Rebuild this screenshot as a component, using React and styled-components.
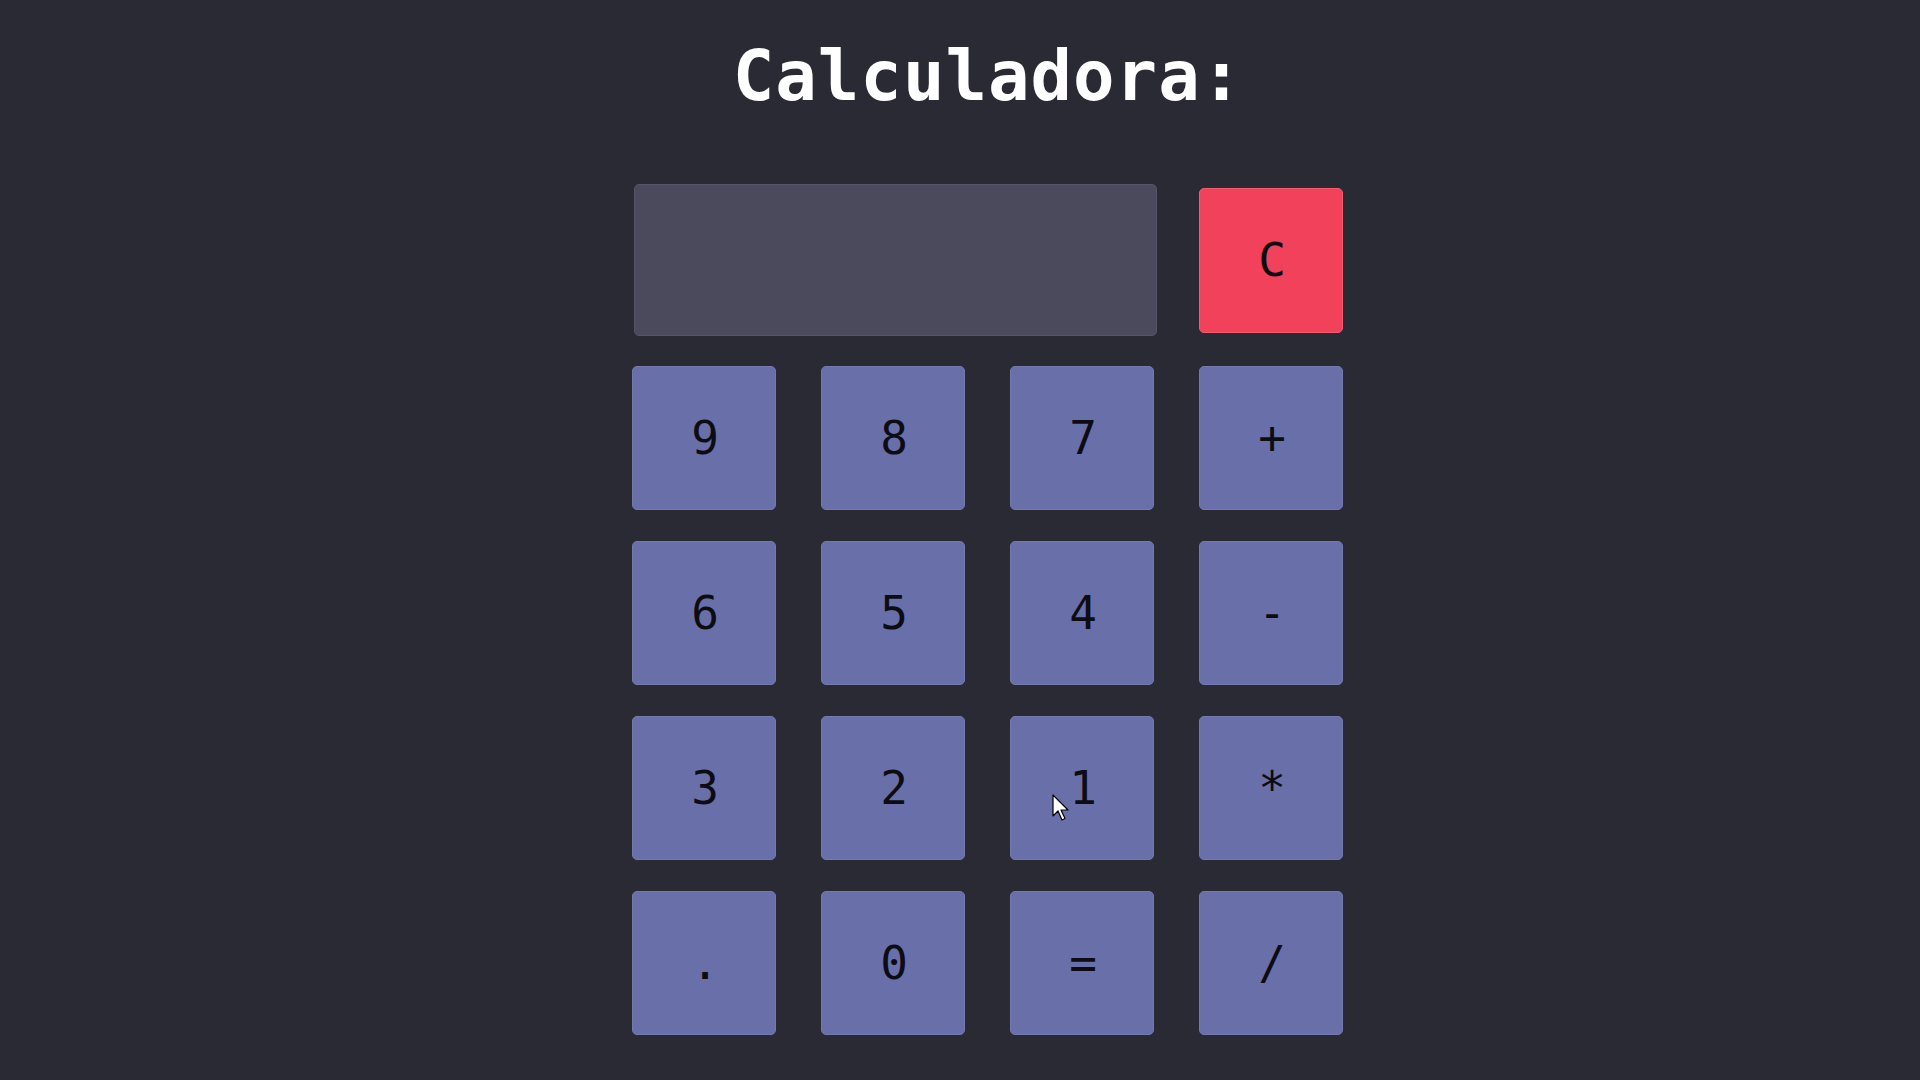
import React, { useState } from 'react'
import styled, { createGlobalStyle } from 'styled-components'

const GlobalStyle = createGlobalStyle`
  html, body {
    margin: 0;
    padding: 0;
    background: #2a2a35;
    min-height: 100vh;
  }
  body {
    font-family: 'DejaVu Sans Mono', 'Liberation Mono', monospace;
  }
`

const Page = styled.main`
  position: relative;
  box-sizing: border-box;
  width: 1920px;
  height: 1080px;
  padding-left: 52px;
  display: flex;
  flex-direction: column;
  align-items: center;
  background: #2a2a35;
  overflow: hidden;
`

const Title = styled.h1`
  margin: 33px 0 0 4px;
  font-family: 'DejaVu Sans Mono', monospace;
  font-weight: 700;
  font-size: 69px;
  line-height: 86px;
  color: #ffffff;
  letter-spacing: 1px;
`

const Keypad = styled.div`
  margin-top: 66px;
  padding-left: 3px;
  display: grid;
  grid-template-columns: repeat(4, 144px);
  grid-template-rows: 150px;
  grid-auto-rows: 144px;
  column-gap: 45px;
  row-gap: 31px;
  align-items: center;
`

const Display = styled.input`
  grid-column: span 3;
  box-sizing: border-box;
  width: 523px;
  height: 152px;
  margin: -1px 0 -1px 2px;
  background: #4a4a5c;
  border: 1px solid #55546a;
  border-radius: 5px;
  color: #fff;
  font-family: 'DejaVu Sans Mono', monospace;
  font-size: 48px;
  text-align: right;
  padding: 0 20px;
  outline: none;
`

const Key = styled.button`
  box-sizing: border-box;
  width: 144px;
  height: ${p => (p.$clear ? '145px' : '144px')};
  margin: 0;
  padding: 0 0 0 2px;
  display: flex;
  align-items: center;
  justify-content: center;
  background: ${p => (p.$clear ? '#f2415a' : '#696fa9')};
  border: 1px solid ${p => (p.$clear ? '#f55a6e' : '#7479ae')};
  border-radius: 5px;
  color: #0c0c12;
  font-family: 'DejaVu Sans Mono', monospace;
  font-size: 46px;
  cursor: pointer;
`

const Cursor = styled.svg`
  position: absolute;
  left: 1052px;
  top: 794px;
  width: 20px;
  height: 30px;
  pointer-events: none;
`

const keys = ['9', '8', '7', '+', '6', '5', '4', '-', '3', '2', '1', '*', '.', '0', '=', '/']

export default function App() {
  const [value, setValue] = useState('')

  const press = k => {
    if (k === '=') {
      try {
        // eslint-disable-next-line no-new-func
        setValue(String(Function(`return (${value})`)()))
      } catch (e) {
        setValue('')
      }
      return
    }
    setValue(v => v + k)
  }

  return (
    <>
      <GlobalStyle />
      <Page>
        <Title>Calculadora:</Title>
        <Keypad>
          <Display value={value} readOnly />
          <Key $clear onClick={() => setValue('')}>
            C
          </Key>
          {keys.map(k => (
            <Key key={k} onClick={() => press(k)}>
              {k}
            </Key>
          ))}
        </Keypad>
        <Cursor viewBox='0 0 20 30'>
          <path
            d='M1 1 L1 22 L6 17 L10 26 L13 24.5 L9 16 L16 16 Z'
            fill='#ffffff'
            stroke='#000000'
            strokeWidth='1.2'
            strokeLinejoin='round'
          />
        </Cursor>
      </Page>
    </>
  )
}
